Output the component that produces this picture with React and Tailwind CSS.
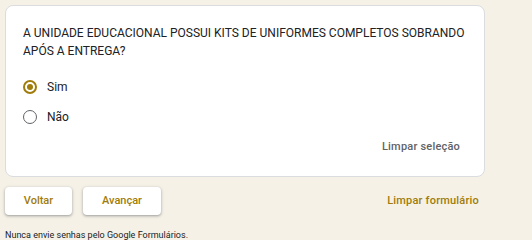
export default function App() {
  return (
    <div
      className="w-[532px] h-[240px] overflow-hidden bg-[#f5f1e7] pl-[5px] pt-[5px]"
      style={{ fontFamily: "Roboto, 'Liberation Sans', sans-serif" }}
    >
      <div className="w-[480px] h-[172px] bg-white rounded-[8px] border border-[#dadce0] pl-[17px] pr-[8px] pt-[18px] flex flex-col">
        <div className="text-[12px] leading-[18px] text-[#202124]">
          A UNIDADE EDUCACIONAL POSSUI KITS DE UNIFORMES COMPLETOS SOBRANDO
          APÓS A ENTREGA?
        </div>

        <div className="mt-[20px] flex flex-col gap-[16px]">
          <label className="flex items-center gap-[10px] h-[14px]">
            <span className="w-[14px] h-[14px] rounded-full border-[2px] border-[#a07c0a] flex items-center justify-center">
              <span className="w-[6px] h-[6px] rounded-full bg-[#a07c0a]" />
            </span>
            <span className="text-[12px] text-[#202124]">Sim</span>
          </label>
          <label className="flex items-center gap-[10px] h-[14px]">
            <span className="w-[14px] h-[14px] rounded-full border-[1.5px] border-[#5f6368]" />
            <span className="text-[12px] text-[#202124]">Não</span>
          </label>
        </div>

        <div className="mt-[15px] pr-[16px] flex justify-end">
          <span className="text-[11px] font-medium text-[#5f6368] tracking-[0.2px]">
            Limpar seleção
          </span>
        </div>
      </div>

      <div className="mt-[10px] w-[480px] flex items-center">
        <button className="w-[67px] h-[28px] bg-white rounded-[4px] shadow-[0_1px_2px_rgba(60,64,67,0.3),0_1px_3px_1px_rgba(60,64,67,0.15)] text-[11px] font-medium text-[#a07c0a]">
          Voltar
        </button>
        <button className="ml-[11px] w-[78px] h-[28px] bg-white rounded-[4px] shadow-[0_1px_2px_rgba(60,64,67,0.3),0_1px_3px_1px_rgba(60,64,67,0.15)] text-[11px] font-medium text-[#a07c0a]">
          Avançar
        </button>
        <span className="ml-auto mr-[6px] text-[11px] font-medium text-[#a07c0a] tracking-[0.2px]">
          Limpar formulário
        </span>
      </div>

      <div className="mt-[14px] text-[9px] text-[#202124]">
        Nunca envie senhas pelo Google Formulários.
      </div>
    </div>
  );
}
